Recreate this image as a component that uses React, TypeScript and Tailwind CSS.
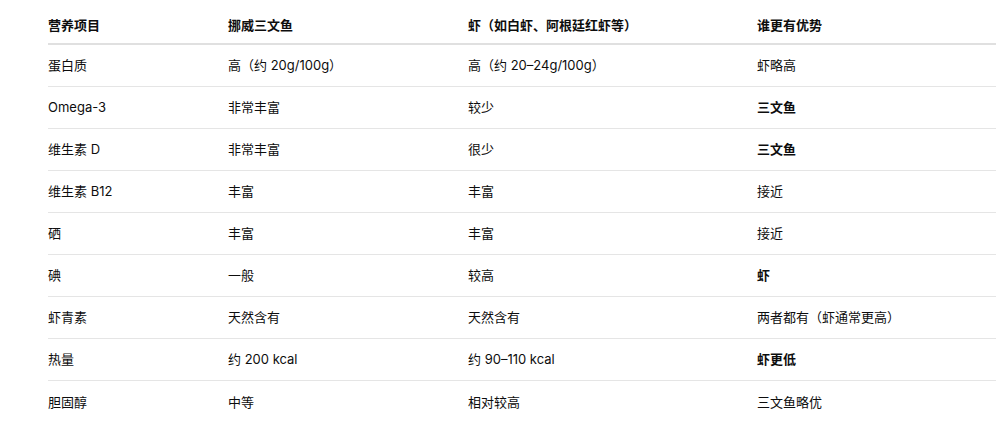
import React from "react";

const rows: [string, string, string, string, boolean][] = [
  ["蛋白质", "高（约 20g/100g）", "高（约 20–24g/100g）", "虾略高", false],
  ["Omega-3", "非常丰富", "较少", "三文鱼", true],
  ["维生素 D", "非常丰富", "很少", "三文鱼", true],
  ["维生素 B12", "丰富", "丰富", "接近", false],
  ["硒", "丰富", "丰富", "接近", false],
  ["碘", "一般", "较高", "虾", true],
  ["虾青素", "天然含有", "天然含有", "两者都有（虾通常更高）", false],
  ["热量", "约 200 kcal", "约 90–110 kcal", "虾更低", true],
  ["胆固醇", "中等", "相对较高", "三文鱼略优", false],
];

const font = { fontFamily: '"Inter", "Noto Sans CJK SC", sans-serif' };

export default function App() {
  return (
    <div className="w-[996px] h-[436px] overflow-hidden bg-white text-[13px] text-[#0d0d0d]" style={font}>
      <div className="pl-12 pt-[6px] w-[1010px]">
        <div className="grid grid-cols-[180px_240px_289px_1fr] h-[39px] pt-[2px] items-center border-b-2 border-[#e0e0e0] font-semibold">
          <div>营养项目</div>
          <div>挪威三文鱼</div>
          <div>虾（如白虾、阿根廷红虾等）</div>
          <div>谁更有优势</div>
        </div>
        {rows.map((r, i) => (
          <div
            key={i}
            className={`grid grid-cols-[180px_240px_289px_1fr] h-[42px] pt-[1px] items-center ${i < rows.length - 1 ? "border-b border-[#e5e5e5]" : ""}`}
          >
            <div>{r[0]}</div>
            <div>{r[1]}</div>
            <div>{r[2]}</div>
            <div className={r[4] ? "font-semibold" : ""}>{r[3]}</div>
          </div>
        ))}
      </div>
    </div>
  );
}
